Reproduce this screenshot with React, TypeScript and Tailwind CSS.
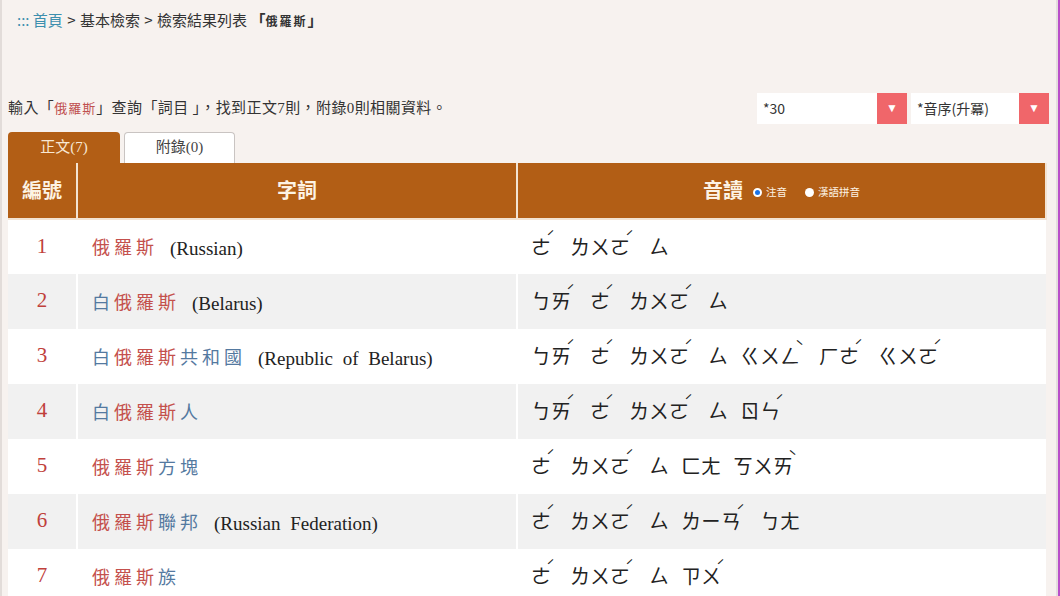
import type { ReactNode } from "react";

const cjk = "font-['Noto_Sans_CJK_TC','Noto_Sans',sans-serif]";
const serif = "font-['Liberation_Serif','Noto_Sans_CJK_TC',serif]";

type Part = [string, "hit" | "other"];

const entries: { parts: Part[]; en?: string; reading: string }[] = [
  { parts: [["俄羅斯", "hit"]], en: "(Russian)", reading: "ㄜˊ ㄌㄨㄛˊ ㄙ" },
  { parts: [["白", "other"], ["俄羅斯", "hit"]], en: "(Belarus)", reading: "ㄅㄞˊ ㄜˊ ㄌㄨㄛˊ ㄙ" },
  {
    parts: [["白", "other"], ["俄羅斯", "hit"], ["共和國", "other"]],
    en: "(Republic of Belarus)",
    reading: "ㄅㄞˊ ㄜˊ ㄌㄨㄛˊ ㄙ ㄍㄨㄥˋ ㄏㄜˊ ㄍㄨㄛˊ",
  },
  { parts: [["白", "other"], ["俄羅斯", "hit"], ["人", "other"]], reading: "ㄅㄞˊ ㄜˊ ㄌㄨㄛˊ ㄙ ㄖㄣˊ" },
  { parts: [["俄羅斯", "hit"], ["方塊", "other"]], reading: "ㄜˊ ㄌㄨㄛˊ ㄙ ㄈㄤ ㄎㄨㄞˋ" },
  {
    parts: [["俄羅斯", "hit"], ["聯邦", "other"]],
    en: "(Russian Federation)",
    reading: "ㄜˊ ㄌㄨㄛˊ ㄙ ㄌㄧㄢˊ ㄅㄤ",
  },
  { parts: [["俄羅斯", "hit"], ["族", "other"]], reading: "ㄜˊ ㄌㄨㄛˊ ㄙ ㄗㄨˊ" },
];

const tones = "ˊˇˋ";

function Reading({ text }: { text: string }) {
  return (
    <div className={`flex items-center gap-[12px] text-[20px] leading-none text-[#222] ${cjk}`}>
      {text.split(" ").map((syl, i) => {
        const last = syl.slice(-1);
        const hasTone = tones.includes(last);
        const body = hasTone ? syl.slice(0, -1) : syl;
        return (
          <span key={i} className="inline-flex items-start">
            <span>{body}</span>
            {hasTone && (
              <span className="relative -left-[5px] -top-[8px] w-[7px] text-[15px] leading-none">
                {last}
              </span>
            )}
          </span>
        );
      })}
    </div>
  );
}

function DropSelect({ label, width }: { label: string; width: string }) {
  return (
    <div className={`flex h-[31px] ${width} items-center bg-white`}>
      <span className={`flex-1 pl-[6px] text-[14px] text-[#333] ${cjk}`}>{label}</span>
      <span className="flex h-[31px] w-[30px] items-center justify-center bg-[#f0666a] text-[12px] text-white">
        ▼
      </span>
    </div>
  );
}

function HeadCell({ children, className = "" }: { children: ReactNode; className?: string }) {
  return (
    <th
      className={`h-[56px] border-r-2 border-b-2 border-[#f3e3d2] bg-[#b25e15] text-[20px] font-bold text-[#fdf3e4] ${cjk} ${className}`}
    >
      {children}
    </th>
  );
}

export default function App() {
  return (
    <div className="flex h-[596px] w-[1060px] overflow-hidden bg-[#f7f2ef]">
      <div className="w-[2px] bg-[#e2dcd9]" />
      <div className="flex-1 pl-[6px] pr-[6px]">
        <div className={`pt-[9px] pl-[9px] text-[15px] text-[#333] ${cjk}`}>
          <span className="text-[#3d8fae]">::: 首頁</span> <span className="mx-[1px]">&gt;</span> 基本檢索{" "}
          <span className="mx-[1px]">&gt;</span> 檢索結果列表{" "}
          <span className="font-bold">
            「<span className="text-[12px] tracking-[2px]">俄羅斯</span>」
          </span>
        </div>

        <div className="mt-[61px] flex items-center justify-between pr-[1px]">
          <div className={`text-[15px] tracking-[0.4px] text-[#333] ${cjk}`}>
            輸入「<span className="text-[13px] tracking-[1px] text-[#c0504f]">俄羅斯</span>」查詢「詞目 」，找到正文
            <span className={serif}>7</span>則，附錄<span className={serif}>0</span>則相關資料。
          </div>
          <div className="flex gap-[4px]">
            <DropSelect label="*30" width="w-[150px]" />
            <DropSelect label="*音序(升冪)" width="w-[138px]" />
          </div>
        </div>

        <div className="mt-[8px] flex items-end gap-[4px]">
          <div
            className={`flex h-[31px] w-[112px] items-center justify-center rounded-t-[4px] bg-[#b25e15] text-[15px] text-[#f8e8d4] ${serif}`}
          >
            正文(7)
          </div>
          <div
            className={`flex h-[31px] w-[111px] items-center justify-center rounded-t-[4px] border border-b-0 border-[#c9c4c2] bg-white text-[15px] text-[#444] ${serif}`}
          >
            附錄(0)
          </div>
        </div>

        <table className="w-[1039px] table-fixed border-collapse">
          <colgroup>
            <col className="w-[69px]" />
            <col className="w-[440px]" />
            <col />
          </colgroup>
          <thead>
            <tr>
              <HeadCell>編號</HeadCell>
              <HeadCell>字詞</HeadCell>
              <HeadCell className="border-r-0">
                <span className="inline-flex items-center gap-[10px]">
                  <span>音讀</span>
                  <span className="mt-[4px] inline-flex items-center gap-[4px] text-[10.5px] font-normal">
                    <span className="h-[9px] w-[9px] rounded-full border-[2px] border-white bg-[#1a73e8]" />
                    注音
                  </span>
                  <span className="mt-[4px] ml-[8px] inline-flex items-center gap-[4px] text-[10.5px] font-normal">
                    <span className="h-[9px] w-[9px] rounded-full bg-white" />
                    漢語拼音
                  </span>
                </span>
              </HeadCell>
            </tr>
          </thead>
          <tbody>
            {entries.map((e, i) => (
              <tr key={i} className={i % 2 === 1 ? "bg-[#f1f1f1]" : "bg-white"}>
                <td className={`h-[55px] border-r-2 border-white text-center text-[21px] text-[#c0403b] ${serif}`}>
                  {i + 1}
                </td>
                <td className="border-r-2 border-white pl-[14px]">
                  <div className="flex items-center gap-[12px]">
                    <span className={`text-[18px] tracking-[4px] ${cjk}`}>
                      {e.parts.map(([t, kind], j) => (
                        <span key={j} className={kind === "hit" ? "text-[#c4504c]" : "text-[#5479a0]"}>
                          {t}
                        </span>
                      ))}
                    </span>
                    {e.en && (
                      <span className={`mt-[6px] text-[19px] text-[#222] [word-spacing:5px] ${serif}`}>{e.en}</span>
                    )}
                  </div>
                </td>
                <td className="pl-[13px]">
                  <Reading text={e.reading} />
                </td>
              </tr>
            ))}
          </tbody>
        </table>
      </div>
      <div className="w-[2px] bg-[#e4dede]" />
      <div className="w-[2px] bg-[#b94fc9]" />
    </div>
  );
}
